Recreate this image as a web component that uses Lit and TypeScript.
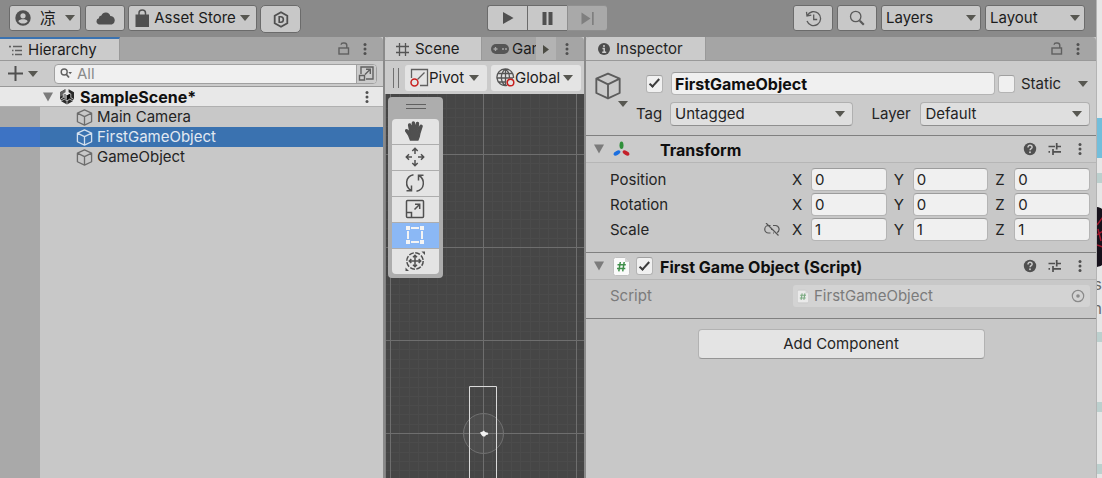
import { LitElement, html, svg, css } from "lit";
import { customElement, state } from "lit/decorators.js";

const base = css`
  *, *::before, *::after { box-sizing: border-box; }
  button, input, select {
    font: inherit;
    color: inherit;
    margin: 0;
    padding: 0;
    border: 0;
    background: none;
    border-radius: 0;
  }
  svg { display: block; flex: none; }
  .push { margin-left: auto; }
  .iconbtn { display: grid; place-items: center; flex: none; }
  .lock { width: 18px; }
  .menu { width: 24px; margin-right: 6px; }
  .tabs {
    display: flex;
    height: 24px;
    background: #a5a5a5;
    border-bottom: 1px solid #999;
    border-radius: 4px 4px 0 0;
    overflow: hidden;
  }
  .tab {
    display: flex;
    align-items: center;
    height: 24px;
    flex: none;
    white-space: nowrap;
  }
  .tab.on { background: #cbcbcb; border-right: 1px solid #999; }
  .check {
    appearance: none;
    flex: none;
    width: 17px;
    height: 18px;
    background: #f0f0f0;
    border: 1px solid #b4b4b4;
    border-top-color: #a0a0a0;
    border-radius: 3px;
    display: grid;
    place-items: center;
  }
  .check:checked::after {
    content: "";
    width: 11px;
    height: 5px;
    border-left: 2px solid #3c3c3c;
    border-bottom: 2px solid #3c3c3c;
    transform: rotate(-48deg) translate(1px, -1px);
  }
  .pick { display: grid; align-items: center; }
  .pick > * { grid-area: 1 / 1; }
  .pick svg { justify-self: end; pointer-events: none; }
  .pick select { appearance: none; width: 100%; height: 100%; }
`;

/* ---------- icons ---------- */
const arrow = (fill = "#575751") => html`<svg width="10" height="6" viewBox="0 0 10 6"><path d="M0 0h10L5 6z" fill=${fill} /></svg>`;
const foldout = html`<svg width="10" height="10" viewBox="0 0 10 10"><path d="M0 .5h10L5 9.5z" fill="#7b7b7b" /></svg>`;
const kebab = html`<svg width="4" height="12" viewBox="0 0 4 12"><g fill="#505050"><circle cx="2" cy="1.6" r="1.5" /><circle cx="2" cy="6" r="1.5" /><circle cx="2" cy="10.4" r="1.5" /></g></svg>`;
const lock = html`<svg width="12" height="13" viewBox="0 0 12 13" fill="none" stroke="#606060" stroke-width="1.4"><rect x="1" y="6" width="9.5" height="6" /><path d="M8.8 6V3.4C8.8 1.8 8 1 6.3 1H5.2C4 1 3.2 1.500 3.100 2.800" /></svg>`;
const cube = (w: number, stroke: string, sw: number) => html`<svg width=${w} height=${w} viewBox="0 0 18 18" fill="none" stroke=${stroke} stroke-width=${sw} stroke-linejoin="round"><path d="M9 1l7.500 3.300v9.200L9 17l-7.500-3.500V4.300zM1.500 4.300L9 8l7.500-3.700M9 8v9" /></svg>`;
const help = html`<svg width="14" height="14" viewBox="0 0 14 14"><circle cx="7" cy="7" r="6.200" fill="#505050" /><path d="M5 5.400C5 4 5.900 3.300 7 3.300s2.100.7 2.100 1.900c0 1.500-2 1.500-2 3" fill="none" stroke="#cbcbcb" stroke-width="1.500" /><circle cx="7" cy="10.300" r=".95" fill="#cbcbcb" /></svg>`;
const sliders = html`<svg width="14" height="12" viewBox="0 0 14 12" fill="none" stroke="#505050" stroke-width="1.700"><path d="M.5 3.500h6.500M9.500 3.500H13M8.700 0v6.500M.5 8.800h1.500M4.500 8.800H13M5 6v6" /></svg>`;
const scriptIcon = (w: number, h: number, op = 1) => html`<svg width=${w} height=${h} viewBox="0 0 17 19" opacity=${op}><path d="M2.500.5H12L16.500 5v11.500a2 2 0 0 1-2 2h-12a2 2 0 0 1-2-2v-14a2 2 0 0 1 2-2z" fill="#fafafa" stroke="#c0c0c0" /><path d="M12 .5V5h4.500z" fill="#d4d4d4" /><path d="M7.300 5L5.800 14.300M11.200 5L9.700 14.300M4.500 7.800h8.300M4 11.500h8.300" stroke="#3f8f4a" stroke-width="1.500" fill="none" /></svg>`;

/* ---------- top toolbar ---------- */
@customElement("editor-toolbar")
class EditorToolbar extends LitElement {
  static styles = [base, css`
    :host { display: block; background: #8a8a8a; }
    .bar { display: grid; grid-template-columns: 1fr auto 1fr; height: 37px; padding: 5px 11px 0 9px; align-items: start; }
    .side { display: flex; gap: 4px; }
    .side.end { justify-content: flex-end; }
    .btn {
      height: 26px;
      background: #c8c8c8;
      border: 1px solid #6b6b6b;
      border-radius: 3px;
      display: flex;
      align-items: center;
      justify-content: center;
    }
    .square { width: 40px; }
    .user { width: 72px; gap: 9px; }
    .store { width: 129px; gap: 4px; white-space: nowrap; }
    .plastic { height: 28px; width: 41px; border-radius: 5px; }
    .side.start { gap: 3px; }
    .side.start .user { margin-right: 1px; }
    .play { display: flex; }
    .play .btn { width: 40px; border-radius: 0; border-right-width: 0; }
    .play .btn:first-child { border-radius: 3px 0 0 3px; }
    .play .btn:disabled { background: #a9a9a9; border-color: #8f8f8f; border-radius: 0 3px 3px 0; }
    .drop { width: 100px; }
    .drop select { padding-left: 4px; }
    .drop.btn { display: grid; justify-content: stretch; padding-right: 4px; }
    .cn { font-size: 16px; }
  `];
  render() {
    return html`<header class="bar">
      <div class="side start">
        <button class="btn user" aria-label="Account">
          <svg width="16" height="16" viewBox="0 0 16 16"><circle cx="8" cy="8" r="7.700" fill="#505050" /><circle cx="8" cy="5.800" r="2.600" fill="#c8c8c8" /><path d="M3.300 11.200C4 9.600 6 9.200 8 9.200s4 .4 4.700 2c-1 1.500-2.700 2.300-4.700 2.300s-3.700-.8-4.700-2.300z" fill="#c8c8c8" /></svg>
          <span class="cn">凉</span>${arrow()}
        </button>
        <button class="btn square" aria-label="Cloud">
          <svg width="19" height="14" viewBox="0 0 19 14"><path d="M3.500 13.500a3.200 3.200 0 0 1-.6-6.300 2.600 2.600 0 0 1 2.500-2.700A4.700 4.700 0 0 1 14.300 5a4.400 4.400 0 0 1 1.600 8.500z" fill="#505050" /></svg>
        </button>
        <button class="btn store">
          <svg width="15" height="18" viewBox="0 0 15 18"><path d="M.5 5.500h13.500V18H.5z" fill="#505050" /><path d="M4 8V4c0-4 6.500-4 6.500 0v4" fill="none" stroke="#505050" stroke-width="1.500" /></svg>
          <span>Asset Store</span>${arrow()}
        </button>
        <button class="btn plastic" aria-label="Version control">
          <svg width="16" height="17" viewBox="0 0 16 17"><path d="M8 1.200l6.300 3.600v7.400L8 15.800l-6.300-3.600V4.800z" fill="none" stroke="#505050" stroke-width="1.800" /><path d="M6.200 5.800h1.600c3.400 0 3.400 5.400 0 5.400H6.200z" fill="none" stroke="#505050" stroke-width="1.600" /></svg>
        </button>
      </div>
      <div class="play">
        <button class="btn" aria-label="Play"><svg width="12" height="12" viewBox="0 0 12 12"><path d="M1 0l10.500 6L1 12z" fill="#505050" /></svg></button>
        <button class="btn" aria-label="Pause"><svg width="11" height="13" viewBox="0 0 11 13"><path d="M.5 0h4v13h-4zM6.500 0h4v13h-4z" fill="#505050" /></svg></button>
        <button class="btn" aria-label="Step" disabled><svg width="13" height="13" viewBox="0 0 13 13"><path d="M.5.500L9.500 6.500l-9 6zM11 0h1.700v13H11z" fill="#7f7f7f" /></svg></button>
      </div>
      <div class="side end">
        <button class="btn square" aria-label="History">
          <svg width="17" height="17" viewBox="0 0 17 17" fill="none" stroke="#5a5a5a" stroke-width="1.300"><path d="M2.300 5.500A7 7 0 1 1 2 11M1.500 1.800l.5 4.200 4.300-.8M8.700 4.500v5h3.500" /></svg>
        </button>
        <button class="btn square" aria-label="Search">
          <svg width="16" height="16" viewBox="0 0 16 16" fill="none" stroke="#5a5a5a"><circle cx="6.700" cy="6.500" r="5.200" stroke-width="1.300" /><path d="M10.800 10.800l4 4" stroke-width="2.200" /></svg>
        </button>
        <div class="btn drop pick"><select aria-label="Layers"><option>Layers</option></select>${arrow()}</div>
        <div class="btn drop pick"><select aria-label="Layout"><option>Layout</option></select>${arrow()}</div>
      </div>
    </header>`;
  }
}

/* ---------- hierarchy ---------- */
@customElement("hierarchy-panel")
class HierarchyPanel extends LitElement {
  @state() private selected = 1;
  private items = ["Main Camera", "FirstGameObject", "GameObject"];
  static styles = [base, css`
    :host { display: flex; flex-direction: column; background: #c8c8c8; min-width: 0; }
    .tab.on { width: 120px; border-top: 2px solid #3a72b0; padding-left: 9px; gap: 6px; }
    .tabs { border-top-left-radius: 0; }
    .tools { display: flex; align-items: center; height: 26px; background: #cbcbcb; padding: 0 6px 0 8px; border-bottom: 1px solid #999; }
    .add { display: flex; align-items: center; gap: 5px; width: 46px; }
    .search { flex: 1; display: flex; height: 20px; background: #f0f0f0; border: 1px solid #a0a0a0; border-radius: 4px; align-items: center; padding-left: 5px; gap: 5px; overflow: hidden; }
    .search input { flex: 1; min-width: 0; outline: 0; }
    .search input::placeholder { color: #8a8a8a; opacity: 1; }
    .expand { width: 20px; height: 20px; background: #cbcbcb; border-left: 1px solid #a0a0a0; }
    .scene { display: flex; align-items: center; height: 20px; padding: 0 14px 0 43px; background: #e8e8e8; border-bottom: 1px solid #b0b0b0; font-weight: 700; font-size: 16px; color: #0f0f0f; }
    .scene svg + svg { margin: 0 5px 0 6px; }
    .tree { flex: 1; background: linear-gradient(90deg, #a9a9a9 40px, transparent 40px); }
    .row { display: flex; width: 100%; height: 20px; align-items: center; gap: 4px; padding-left: 76px; color: #242424; text-align: left; }
    .row.sel { background: linear-gradient(90deg, #3d73c4 40px, #3a72b0 40px); color: #e2e9f2; }
  `];
  render() {
    return html`
      <div class="tabs">
        <div class="tab on">
          <svg width="13" height="11" viewBox="0 0 13 11" stroke="#606060" stroke-width="1.300"><path d="M0 1.500h2M4 1.500h9M3 5.500h1.500M6 5.500h7M3 9.500h1.500M6 9.500h7M1 1v1.500" fill="none" /></svg>
          <span>Hierarchy</span>
        </div>
        <button class="iconbtn lock push" aria-label="Lock">${lock}</button>
        <button class="iconbtn menu" aria-label="Menu">${kebab}</button>
      </div>
      <div class="tools">
        <button class="add" aria-label="Create">
          <svg width="15" height="15" viewBox="0 0 15 15"><path d="M7.500 0v15M0 7.500h15" stroke="#505050" stroke-width="2" /></svg>${arrow()}
        </button>
        <div class="search">
          <svg width="12" height="11" viewBox="0 0 12 11"><circle cx="4.200" cy="4" r="3" fill="none" stroke="#606060" stroke-width="1.400" /><path d="M6 6l3 3.500" stroke="#606060" stroke-width="1.800" /><path d="M8.300 4h3.700l-1.800 2.200z" fill="#606060" /></svg>
          <input type="text" placeholder="All" aria-label="Search hierarchy" />
          <button class="expand iconbtn" aria-label="Open search window">
            <svg width="17" height="17" viewBox="0 0 17 17" fill="none" stroke="#606060" stroke-width="1.400"><path d="M3 9V2h12v12H8M1.500 10.500h5v4.500h-5zM7 9.500l5-5M8 4.300h4.300V9" /></svg>
          </button>
        </div>
      </div>
      <div class="scene">
        ${foldout}
        <svg width="16" height="17" viewBox="0 0 16 17"><path d="M6.700 1L1 4.200v7L2.500 12l-.3 1.200L8 16.500l5.800-3.300-.3-1.200 1.500-.8v-7L9.300 1v3.200L11.500 5.500 8 7.500 4.500 5.500 6.700 4.200z" fill="#2a2a2a" /><path d="M1 4.200L6.700 1v3.200L4.500 5.500 8 7.500v4.200L4.300 9.600V7L1 9z" fill="#606060" /><path d="M8 7.500L4.300 5.400v4.200L8 11.700z" fill="#8c8c8c" /><path d="M8 7.500l3.700-2.100v4.200L8 11.700z" fill="#0c0c0c" /><path d="M6.900 1v3.400L4.200 6v3.600L1.400 11.200M9.100 1v3.400L11.800 6v3.600l2.800 1.600M2.300 12.900L5.200 11.200 8 12.800l2.800-1.600 2.900 1.700M8 12.800v3.700" fill="none" stroke="#e8e8e8" stroke-width=".7" /></svg>
        <span>SampleScene*</span>
        <button class="iconbtn push" aria-label="Scene menu">${kebab}</button>
      </div>
      <div class="tree">
        ${this.items.map((name, i) => html`<button class="row ${i === this.selected ? "sel" : ""}" @click=${() => (this.selected = i)}>
          ${cube(17, i === this.selected ? "#d3e0ee" : "#6c6c6c", 1.4)}<span>${name}</span>
        </button>`)}
      </div>`;
  }
}

/* ---------- scene ---------- */
const GRID = 93;
const toolIcons = [
  { name: "Hand", icon: svg`<path d="M5.500 19L3.500 14 .8 10.200c-.6-1.100.8-1.900 1.700-1L5 11.500 3.700 4.300c-.2-1.400 1.600-1.700 1.900-.4L7.200 9 7.400 2c0-1.400 1.900-1.400 2 0l.4 6.800L11.500 2.400c.3-1.400 2.100-1 1.900.4L12.600 9.500l2.600-4.600c.7-1.200 2.200-.4 1.700.9l-2 6.200c-.4 3-.9 5-2 7z" fill="#505050" />` },
  { name: "Move", icon: svg`<path d="M10 7V1.500M10 13v5.500M7 10H1.500M13 10h5.500M7.300 4L10 1.300 12.700 4M7.300 16L10 18.700 12.700 16M4 7.300L1.300 10 4 12.700M16 7.300L18.700 10 16 12.700" />` },
  { name: "Rotate", icon: svg`<path d="M8.500 1.800C0 3.500-.3 13.500 6 17.500M1.500 17.800h5V12.500M11.500 18.200c8.500-1.700 8.800-11.700 2.500-15.700M18.500 2.200h-5V7.500" />` },
  { name: "Scale", icon: svg`<rect x="1.500" y="1.500" width="17" height="17" rx="1" /><path d="M1.500 13.500h5v5M9.500 10.500l5-5M10 5.300h4.700V10" />` },
  { name: "Rect", icon: svg`<path d="M6 3h8M6 17h8M3 6v8M17 6v8" stroke="#f4f4f4" stroke-width="2" /><path d="M1 1h4v4H1zM15 1h4v4h-4zM1 15h4v4H1zM15 15h4v4h-4z" fill="#f4f4f4" stroke="none" />` },
  { name: "Transform", icon: svg`<circle cx="10" cy="10" r="8.200" stroke-dasharray="5 1.440" /><path d="M10 4.500v11M4.500 10h11M8 6.300l2-2 2 2M8 13.700l2 2 2-2M6.300 8l-2 2 2 2M13.700 8l2 2-2 2" /><path d="M16.500.500H20V4zM.500 16.500V20H4z" fill="#505050" stroke="none" />` },
];

@customElement("scene-panel")
class ScenePanel extends LitElement {
  static styles = [base, css`
    :host { display: flex; flex-direction: column; background: #cbcbcb; min-width: 0; overflow: hidden; }
    .tab.on { width: 97px; padding-left: 11px; gap: 6px; }
    .tab.cut { width: 54px; flex: 0 1 54px; overflow: hidden; padding-left: 9px; gap: 3px; }
    .more { width: 20px; height: 24px; background: #b3b3b3; }
    .next { width: 22px; }
    .tools { display: flex; align-items: center; height: 33px; padding-left: 8px; gap: 4px; }
    .grip { width: 6px; height: 20px; border: solid #707070; border-width: 0 1px; margin-right: 2px; flex: none; }
    .mode { display: flex; align-items: center; height: 26px; background: #e4e4e4; border-radius: 3px; white-space: nowrap; flex: none; padding: 0 8px 0 5px; }
    .pivot { width: 82px; }
    .global { width: 90px; }
    .mode svg:last-child { margin-left: auto; }
    .view { flex: 1; position: relative; background: #464646; border-left: 1px solid #808080; overflow: hidden; }
    .canvas { position: absolute; inset: 0; width: 100%; height: 100%; }
    .palette { position: absolute; left: 2px; top: 3px; width: 55px; padding: 7px 4px 4px; background: #adadad; border-radius: 4px; }
    .handle { width: 20px; height: 5px; margin: 0 auto 10px; border: solid #606060; border-width: 1px 0; }
    .set { display: grid; gap: 1px; border-radius: 4px; overflow: hidden; }
    .tool { height: 25px; background: #e4e4e4; display: grid; place-content: start; padding: 2px 13px; }
    .tool.on { background: #8bb8f5; }
  `];
  render() {
    const minor: unknown[] = [];
    for (let i = -5; i < 45; i++) {
      const p = Math.round((i * GRID) / 10);
      minor.push(svg`<path d="M${p + 4.5} 0v2000M0 ${p + 60.5}h2000" />`);
    }
    const major = [0, 1, 2, 3, 4, 5, 6, 7].map((i) => svg`<path d="M${i * GRID + 4.5} 0v2000M0 ${i * GRID + 60.5}h2000" />`);
    return html`
      <div class="tabs">
        <div class="tab on">
          <svg width="13" height="13" viewBox="0 0 13 13"><path d="M3.500 0v13M9.500 0v13M0 3.500h13M0 9.500h13" stroke="#555" stroke-width="1.300" /></svg>
          <span>Scene</span>
        </div>
        <div class="tab cut">
          <svg width="18" height="10" viewBox="0 0 18 10"><rect width="18" height="10" rx="5" fill="#555" /><path d="M2.500 5h4M4.500 3v4" stroke="#a5a5a5" stroke-width="1.300" /><circle cx="12" cy="5" r="1" fill="#a5a5a5" /><circle cx="15" cy="5" r="1" fill="#a5a5a5" /></svg>
          <span>Game</span>
        </div>
        <button class="iconbtn more" aria-label="Next tab"><svg width="6" height="9" viewBox="0 0 6 9"><path d="M0 0l6 4.500L0 9z" fill="#4c4c44" /></svg></button>
        <button class="iconbtn next" aria-label="Menu">${kebab}</button>
      </div>
      <div class="tools">
        <div class="grip"></div>
        <button class="mode pivot">
          <svg width="19" height="19" viewBox="0 0 19 19" fill="none" stroke="#606060" stroke-width="1.300"><path d="M1.500 10V1.500h16v16H10M7.500 11.500l7-7" /><circle cx="4.500" cy="14.500" r="3.500" stroke="#c8201e" stroke-width="1.500" /></svg>
          <span>Pivot</span>${arrow()}
        </button>
        <button class="mode global">
          <svg width="19" height="19" viewBox="0 0 19 19" fill="none" stroke="#555" stroke-width="1.300"><path d="M11 17.300A8.300 8.300 0 1 1 17.500 10M9.500 1c-5.500 4-5.500 13 0 16.500M9.500 1c3 2.500 4 5.500 4 8.500M9.500 1v16.500M2.300 5.500h14.500M1 10h16M2.300 14h8" /><circle cx="14.500" cy="14.500" r="3.300" stroke="#c8201e" stroke-width="1.500" fill="#e4e4e4" /></svg>
          <span>Global</span>${arrow()}
        </button>
      </div>
      <div class="view">
        <svg class="canvas" fill="none">
          <g stroke="#4b4b4b">${minor}</g>
          <g stroke="#6e6e6e">${major}</g>
          <circle cx="97.500" cy="339.500" r="20" fill="#ffffff" fill-opacity=".04" stroke="#707070" />
          <path d="M83.500 1000V292.500h27V1000" stroke="#dadada" />
          <path d="M94 338.500l2.500-1 1.500-1 1 1.500 3 .8.200 1.700-2.200.5-1 1.500h-2l-1.500-1.500z" fill="#f2f2f2" />
        </svg>
        <div class="palette">
          <div class="handle"></div>
          <div class="set">
            ${toolIcons.map((t) => html`<button class="tool ${t.name === "Rect" ? "on" : ""}" aria-label=${t.name}>
              <svg width="20" height="20" viewBox="0 0 20 20" fill="none" stroke="#505050" stroke-width="1.500">${t.icon}</svg>
            </button>`)}
          </div>
        </div>
      </div>`;
  }
}

/* ---------- inspector ---------- */
@customElement("inspector-panel")
class InspectorPanel extends LitElement {
  private rows = [
    { name: "Position", v: [0, 0, 0] },
    { name: "Rotation", v: [0, 0, 0] },
    { name: "Scale", v: [1, 1, 1] },
  ];
  static styles = [base, css`
    :host { display: block; background: #c8c8c8; min-width: 0; color: #242424; }
    .tab.on { width: 120px; padding-left: 12px; gap: 6px; }
    .object { display: flex; gap: 16px; padding: 11px 6px 10px 8px; background: #cbcbcb; border-bottom: 1px solid #808080; }
    .kind { display: flex; flex-direction: column; align-items: flex-end; width: 34px; height: 34px; flex: none; }
    .kind svg:first-child { align-self: flex-start; margin-bottom: 1px; }
    .lines { flex: 1; display: grid; gap: 7px; min-width: 0; }
    .line { display: flex; align-items: center; height: 23px; }
    .field { height: 23px; min-width: 0; background: #f0f0f0; border: 1px solid #b4b4b4; border-top-color: #9c9c9c; border-radius: 4px; padding: 0 3px; outline: 0; }
    .name { flex: 1; font-weight: 700; font-size: 16px; margin: 0 3px 0 8px; color: #0f0f0f; }
    .first .check:first-child { margin-left: 2px; }
    .static { margin-left: 6px; width: 55px; }
    .taglabel { width: 34px; margin-left: -8px; }
    .layerlabel { width: 49px; margin-left: 18px; }
    .choice { height: 24px; flex: 184 1 0; background: #dfdfdf; border: 1px solid #b0b0b0; border-bottom-color: #8f8f8f; border-radius: 4px; padding: 0 7px 0 4px; }
    .choice.layer { flex-grow: 169; }
    .arrowbtn { padding: 4px 2px; }
    .head { display: flex; align-items: center; height: 27px; padding: 0 14px 0 8px; background: #cbcbcb; border-bottom: 1px solid #b6b6b6; }
    .glyph { width: 18px; margin: 0 6px 0 8px; display: grid; place-items: center; }
    .slot { width: 17px; margin-right: 7px; }
    .title { font-weight: 700; color: #0f0f0f; font-size: 16px; padding-top: 1px; }
    .acts { display: flex; gap: 11px; align-items: center; }
    .acts button:last-child { margin-left: 5px; }
    .body { display: grid; gap: 2px; padding: 5px 6px 11px 24px; border-bottom: 1px solid #808080; }
    .vec { display: grid; grid-template-columns: 175px repeat(3, minmax(0, 1fr)); gap: 7px; align-items: center; }
    .vname { display: flex; justify-content: space-between; align-items: center; padding-right: 5px; }
    .axis { display: flex; align-items: center; }
    .axis span { width: 19px; flex: none; }
    .axis input { flex: 1; width: 0; }
    .ref { display: flex; align-items: center; color: #7b7b7b; }
    .ref .rlabel { width: 183px; }
    .slotfield { flex: 1; display: flex; align-items: center; height: 22px; background: #d3d3d3; border-radius: 3px; padding: 0 5px 0 4px; gap: 5px; }
    .slotfield input { flex: 1; min-width: 0; }
    .add { display: block; width: 287px; max-width: 90%; height: 30px; margin: 10px auto 0; background: #e4e4e4; border: 1px solid #b2b2b2; border-bottom-color: #959595; border-radius: 4px; }
  `];
  private actions() {
    return html`<div class="acts push">
      <button class="iconbtn" aria-label="Help">${help}</button>
      <button class="iconbtn" aria-label="Presets">${sliders}</button>
      <button class="iconbtn" aria-label="Menu">${kebab}</button>
    </div>`;
  }
  render() {
    return html`
      <div class="tabs">
        <div class="tab on">
          <svg width="12" height="12" viewBox="0 0 12 12"><circle cx="6" cy="6" r="6" fill="#4c4c4c" /><path d="M6 2v2M4.500 5.500H6.200V9M4.200 9.200h4" stroke="#cbcbcb" stroke-width="1.500" fill="none" /></svg>
          <span>Inspector</span>
        </div>
        <button class="iconbtn lock push" aria-label="Lock">${lock}</button>
        <button class="iconbtn menu" aria-label="Menu">${kebab}</button>
      </div>
      <section class="object">
        <div class="kind">${cube(28, "#5c5c5c", 1.2)}${arrow()}</div>
        <div class="lines">
          <div class="line first">
            <input class="check" type="checkbox" checked aria-label="Active" />
            <input class="field name" type="text" value="FirstGameObject" aria-label="Name" />
            <input class="check" type="checkbox" id="static" />
            <label class="static" for="static">Static</label>
            <button class="arrowbtn" aria-label="Static options">${arrow()}</button>
          </div>
          <div class="line">
            <label class="taglabel" for="tag">Tag</label>
            <div class="choice pick"><select id="tag"><option>Untagged</option></select>${arrow()}</div>
            <label class="layerlabel" for="layer">Layer</label>
            <div class="choice layer pick"><select id="layer"><option>Default</option></select>${arrow()}</div>
          </div>
        </div>
      </section>
      <section>
        <div class="head">
          ${foldout}
          <span class="glyph"><svg width="17" height="17" viewBox="0 0 17 17"><ellipse cx="8.500" cy="4.200" rx="2" ry="3.800" fill="#2f8f3a" /><ellipse cx="4" cy="12" rx="3.700" ry="2" fill="#1b6fe0" transform="rotate(-28 4 12)" /><ellipse cx="13" cy="12" rx="3.700" ry="2" fill="#c4202a" transform="rotate(28 13 12)" /></svg></span>
          <span class="slot"></span>
          <span class="title">Transform</span>${this.actions()}
        </div>
        <div class="body">
          ${this.rows.map((r) => html`<div class="vec">
            <span class="vname">${r.name}${r.name === "Scale" ? html`<svg width="16" height="13" viewBox="0 0 16 13" fill="none" stroke="#555" stroke-width="1.200"><path d="M6.500 2.500H4.500a3.700 3.700 0 0 0 0 7.500h2M9 2.500h2.500a3.700 3.700 0 0 1 1.500 7M9 10h1M7 6.300h1.500M2 0l12.500 12.500" /></svg>` : ""}</span>
            ${["X", "Y", "Z"].map((a, i) => html`<label class="axis"><span>${a}</span><input class="field" type="text" aria-label="${r.name} ${a}" .value=${String(r.v[i])} /></label>`)}
          </div>`)}
        </div>
      </section>
      <section>
        <div class="head">
          ${foldout}
          <span class="glyph">${scriptIcon(17, 19)}</span>
          <input class="check slot" type="checkbox" checked aria-label="Enabled" />
          <span class="title">First Game Object (Script)</span>${this.actions()}
        </div>
        <div class="body">
          <div class="ref">
            <label class="rlabel" for="script">Script</label>
            <div class="slotfield">
              ${scriptIcon(12, 15, 0.6)}
              <input id="script" type="text" value="FirstGameObject" readonly />
              <svg width="14" height="14" viewBox="0 0 14 14"><circle cx="7" cy="7" r="5.700" fill="none" stroke="#8a8a8a" stroke-width="1.200" /><circle cx="7" cy="7" r="1.800" fill="#8a8a8a" /></svg>
            </div>
          </div>
        </div>
      </section>
      <button class="add">Add Component</button>`;
  }
}

/* ---------- page visible behind the editor window ---------- */
@customElement("page-edge")
class PageEdge extends LitElement {
  static styles = css`
    :host { display: flex; flex-direction: column; background: #e6e6e6; border-left: 1px solid #b4b4b4; overflow: hidden; color: #6a6a6a; font-size: 16px; line-height: 24px; }
    .blue { flex: none; height: 40px; margin-top: 118px; background: #73bedb; }
    .band { flex: none; height: 10px; background: #bcd0ce; }
    .a { margin-top: 15px; }
    .b { margin-top: 12px; }
    .c { margin-top: 60px; }
    .d { margin-top: 52px; }
    .pic { flex: none; display: block; margin-top: 24px; }
    .t { flex: none; height: 24px; display: flex; justify-content: flex-end; white-space: nowrap; }
    .t1 { margin-top: 5px; }
  `;
  render() {
    return html`
      <div class="blue"></div>
      <div class="band a"></div>
      <svg class="pic" width="6" height="60" viewBox="0 0 6 60"><path d="M0 0c3 .5 5 1.500 6 3v54c-1 1.500-3 2.500-6 3z" fill="#17121c" /><path d="M0 18l6-8M0 28l6-4M0 38l6 2M1 22l3 12" stroke="#a0182c" stroke-width="1.500" fill="none" /></svg>
      <div class="t t1">s</div>
      <div class="t">n</div>
      <div class="band b"></div>
      <div class="band c"></div>
      <div class="band d"></div>`;
  }
}

@customElement("app-root")
class AppRoot extends LitElement {
  static styles = css`
    :host {
      display: grid;
      grid-template-columns: minmax(0, 1fr) 6px;
      min-height: 100vh;
      font: 15px/20px Inter, "Noto Sans CJK SC", "Noto Sans CJK JP", sans-serif;
      color: #1c1c1c;
    }
    .window { display: flex; flex-direction: column; background: #8a8a8a; }
    .panels { flex: 1; display: grid; grid-template-columns: 383fr 199fr 510fr; gap: 2px; }
  `;
  render() {
    return html`
      <main class="window">
        <editor-toolbar></editor-toolbar>
        <div class="panels">
          <hierarchy-panel></hierarchy-panel>
          <scene-panel></scene-panel>
          <inspector-panel></inspector-panel>
        </div>
      </main>
      <page-edge></page-edge>`;
  }
}
